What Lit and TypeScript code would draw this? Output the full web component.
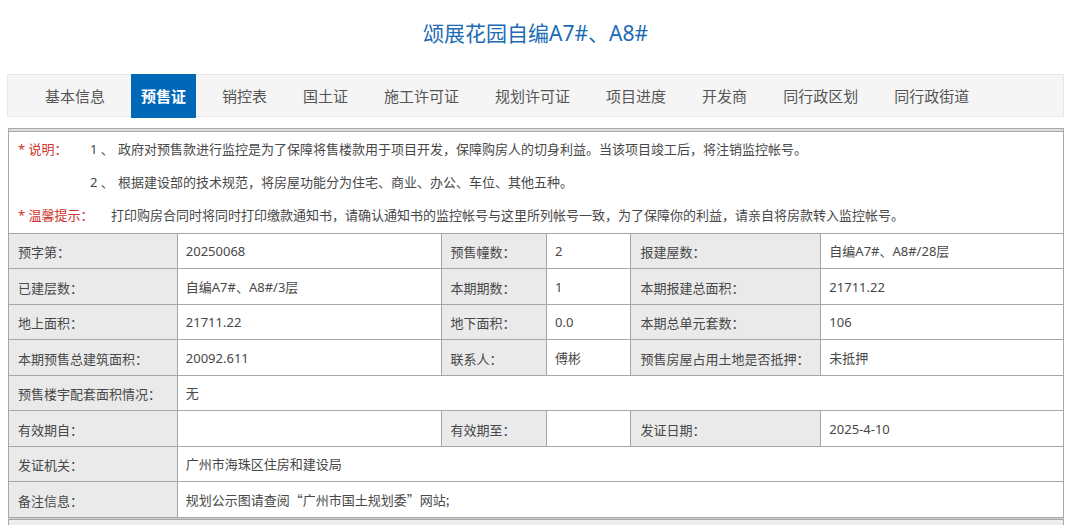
import { LitElement, html, css, nothing } from "lit";
import { customElement, property, state } from "lit/decorators.js";

type Field = { label: string; value: string; cjk?: boolean };

const TABS = [
  "基本信息", "预售证", "销控表", "国土证", "施工许可证",
  "规划许可证", "项目进度", "开发商", "同行政区划", "同行政街道",
];

const ROWS: Field[][] = [
  [
    { label: "预字第：", value: "20250068" },
    { label: "预售幢数：", value: "2" },
    { label: "报建屋数：", value: "自编A7#、A8#/28层" },
  ],
  [
    { label: "已建层数：", value: "自编A7#、A8#/3层" },
    { label: "本期期数：", value: "1" },
    { label: "本期报建总面积：", value: "21711.22" },
  ],
  [
    { label: "地上面积：", value: "21711.22" },
    { label: "地下面积：", value: "0.0" },
    { label: "本期总单元套数：", value: "106" },
  ],
  [
    { label: "本期预售总建筑面积：", value: "20092.611" },
    { label: "联系人：", value: "傅彬" },
    { label: "预售房屋占用土地是否抵押：", value: "未抵押" },
  ],
  [{ label: "预售楼宇配套面积情况：", value: "无" }],
  [
    { label: "有效期自：", value: "" },
    { label: "有效期至：", value: "" },
    { label: "发证日期：", value: "2025-4-10" },
  ],
  [{ label: "发证机关：", value: "广州市海珠区住房和建设局" }],
  [{ label: "备注信息：", value: "规划公示图请查阅“广州市国土规划委”网站;", cjk: true }],
];

@customElement("project-tabs")
export class ProjectTabs extends LitElement {
  @state() private active = 1;

  static styles = css`
    :host { display: block; }
    .bar {
      display: flex;
      gap: 16px;
      height: 43px;
      box-sizing: border-box;
      padding-left: 27px;
      background: #f5f5f5;
      border: 1px solid #e8e8e8;
    }
    .tab {
      display: block;
      height: 44px;
      line-height: 44px;
      margin-top: -1px;
      padding: 0 10px;
      font-size: 15px;
      color: #555;
      text-decoration: none;
      white-space: nowrap;
    }
    .active { background: #0068b7; color: #fff; font-weight: 700; }
  `;

  private pick(e: Event, i: number) {
    e.preventDefault();
    this.active = i;
  }

  render() {
    return html`<nav class="bar">
      ${TABS.map((t, i) => html`<a class="tab ${i === this.active ? "active" : ""}" href="#"
        aria-current=${i === this.active ? "page" : nothing}
        @click=${(e: Event) => this.pick(e, i)}>${t}</a>`)}
    </nav>`;
  }
}

@customElement("permit-table")
export class PermitTable extends LitElement {
  @property({ attribute: false }) rows: Field[][] = [];

  static styles = css`
    :host { display: block; }
    .grid {
      width: 100%;
      table-layout: fixed;
      border-collapse: collapse;
      font-size: 13px;
      line-height: 20px;
      color: #484848;
      background: #fff;
    }
    .c1 { width: 16%; }
    .c2 { width: 25%; }
    .c3 { width: 10%; }
    .c4 { width: 8%; }
    .c5 { width: 18%; }
    .label, .value, .notes {
      border: 1px solid #a6a8a8;
      box-sizing: border-box;
      text-align: left;
      font-weight: 400;
      white-space: nowrap;
    }
    .field { height: 35px; }
    .field:nth-child(odd) { height: 36px; }
    .label { background: #eaeaea; padding: 2px 0 0 9px; }
    .value { padding: 0 0 0 8px; }
    .cjk { font-family: "Noto Sans CJK SC", sans-serif; }
    .notes { padding: 1px 9px; }
    .note { display: flex; margin: 0; line-height: 33px; }
    .tag { color: #d0342c; width: 72px; }
    .wide { width: 93px; }
    .num { width: 28px; }
  `;

  render() {
    return html`<table class="grid">
      <colgroup>
        <col class="c1" /><col class="c2" /><col class="c3" />
        <col class="c4" /><col class="c5" /><col />
      </colgroup>
      <tbody>
        <tr>
          <td class="notes" colspan="6">
            <p class="note"><span class="tag">* 说明：</span><span class="num">1 、</span><span>政府对预售款进行监控是为了保障将售楼款用于项目开发，保障购房人的切身利益。当该项目竣工后，将注销监控帐号。</span></p>
            <p class="note"><span class="tag"></span><span class="num">2 、</span><span>根据建设部的技术规范，将房屋功能分为住宅、商业、办公、车位、其他五种。</span></p>
            <p class="note"><span class="tag wide">* 温馨提示：</span><span>打印购房合同时将同时打印缴款通知书，请确认通知书的监控帐号与这里所列帐号一致，为了保障你的利益，请亲自将房款转入监控帐号。</span></p>
          </td>
        </tr>
        ${this.rows.map((r) => html`<tr class="field">
          ${r.map((f) => html`<th class="label" scope="row">${f.label}</th>
            <td class="value ${f.cjk ? "cjk" : ""}" colspan=${r.length === 1 ? 5 : 1}>${f.value}</td>`)}
        </tr>`)}
      </tbody>
    </table>`;
  }
}

@customElement("app-root")
export class AppRoot extends LitElement {
  static styles = css`
    :host {
      display: flex;
      flex-direction: column;
      min-height: 100vh;
      box-sizing: border-box;
      padding: 0 16px 0 7px;
      background: #fff;
      font-family: "Noto Sans", "Noto Sans CJK SC", sans-serif;
    }
    .title {
      margin: 0;
      padding: 17px 0 25px;
      font-size: 21px;
      line-height: 32px;
      font-weight: 400;
      text-align: center;
      color: #1b6bb5;
    }
    .panel {
      display: flex;
      flex-direction: column;
      flex: 1;
      margin: 11px 0 0 1px;
      background: #d0d0d0;
    }
    .rule {
      height: 3px;
      box-sizing: border-box;
      background: #dedede;
      border: 1px solid #aaa;
      border-bottom: 0;
    }
    .next {
      flex: 1;
      margin-top: 1px;
      background: #eee;
      border: 1px solid #a6a8a8;
      border-bottom: 0;
    }
  `;

  render() {
    return html`
      <h1 class="title">颂展花园自编A7#、A8#</h1>
      <project-tabs></project-tabs>
      <main class="panel">
        <div class="rule"></div>
        <permit-table .rows=${ROWS}></permit-table>
        <div class="next"></div>
      </main>
    `;
  }
}
